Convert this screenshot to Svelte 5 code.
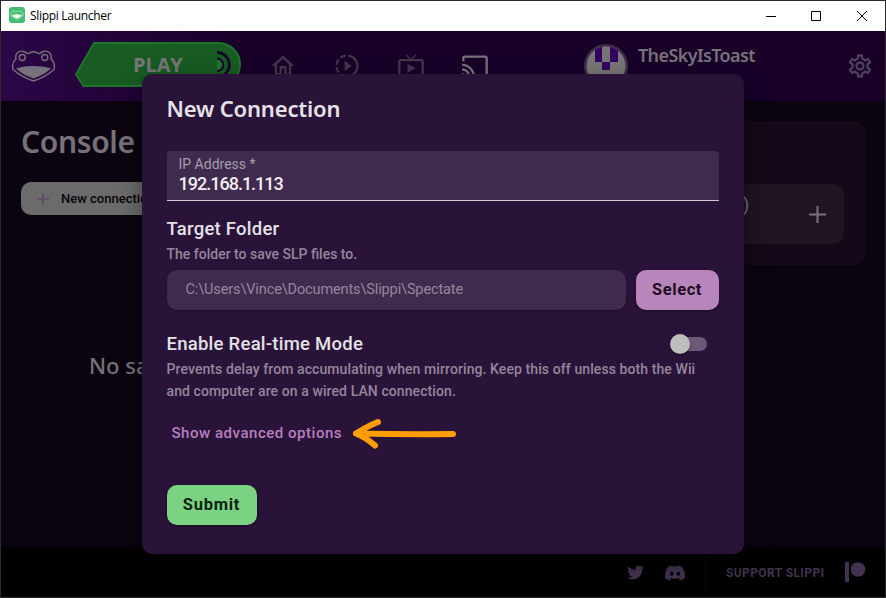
<script>
  const navIcons = [
    { name: 'home', path: 'M12 5.69l5 4.5V18h-2v-6H9v6H7v-7.81l5-4.5M12 3L2 12h3v8h6v-6h2v6h6v-8h3L12 3z' },
    { name: 'replays', path: 'M10 7.5v9L16 12zM11 4.07V2.05c-2.01.2-3.84 1-5.32 2.21L7.1 5.69c1.11-.86 2.44-1.44 3.9-1.62zM5.69 7.1L4.26 5.68C3.05 7.16 2.25 8.99 2.05 11h2.02c.18-1.46.76-2.79 1.62-3.9zM4.07 13H2.05c.2 2.01 1 3.84 2.21 5.32l1.43-1.43c-.86-1.1-1.44-2.43-1.62-3.89zm1.61 6.74C7.16 20.95 9 21.75 11 21.95v-2.02c-1.46-.18-2.79-.76-3.9-1.62l-1.42 1.43zM22 12c0 5.16-3.92 9.42-8.95 9.95v-2.02C16.97 19.41 20 16.05 20 12s-3.03-7.41-6.95-7.93V2.05C18.08 2.58 22 6.84 22 12z' },
    { name: 'spectate', path: 'M21 6h-7.59l3.29-3.29L16 2l-4 4-4-4-.71.71L10.59 6H3c-1.1 0-2 .89-2 2v12c0 1.1.9 2 2 2h18c1.1 0 2-.9 2-2V8c0-1.11-.9-2-2-2zm0 14H3V8h18v12zM9 10v8l7-4z' },
    { name: 'console', active: true, path: 'M21 3H3c-1.1 0-2 .9-2 2v3h2V5h18v14h-7v2h7c1.1 0 2-.9 2-2V5c0-1.1-.9-2-2-2zM1 18v3h3c0-1.66-1.34-3-3-3zm0-4v2c2.76 0 5 2.24 5 5h2c0-3.87-3.13-7-7-7zm0-4v2c4.97 0 9 4.03 9 9h2c0-6.08-4.93-11-11-11z' }
  ];
  let ip = $state('192.168.1.113');
</script>

<div class="window">
  <div class="titlebar">
    <svg class="appicon" viewBox="0 0 16 16"><rect width="16" height="16" rx="3" fill="#45bd70"/><path d="M2 8.5q-.5-2 1-3 .5-2 2.500-1.500l1 .7h3l1-.7q2-.5 2.500 1.500 1.500 1 1 3L8 12.500z" fill="none" stroke="#a9e2bb" stroke-width=".9"/><path d="M3 8q5-1.500 10 0-1.500 2.500-5 3.500-3.500-1-5-3.500z" fill="#effff4"/></svg>
    <span class="apptitle">Slippi Launcher</span>
    <div class="controls">
      <svg viewBox="0 0 12 12"><path d="M1 6.500h10" /></svg>
      <svg viewBox="0 0 12 12"><path d="M1.500 1.500h9v9h-9z" /></svg>
      <svg viewBox="0 0 12 12"><path d="M1 1l10 10M11 1L1 11" /></svg>
    </div>
  </div>

  <header>
    <svg class="frog" viewBox="0 0 44 32">
      <g fill="none" stroke="#77717c" stroke-width="1.400">
        <path d="M4 9C2.500 3 7 .9 10.500 1.200c2.500.2 4 1.600 4.800 2.500L21.500 1.500l6.200 2.200c.8-.9 2.300-2.300 4.800-2.500C36 .9 40.500 3 39 9c3 2.500 4 6 3 10.500C37 24 29 28.500 21.500 31 14 28.500 6 24 1 19.500 0 15 1 11.500 4 9z"/>
        <circle cx="10.200" cy="7.500" r="3"/><circle cx="32.800" cy="7.500" r="3"/>
      </g>
      <path d="M4 18.300q17.500-4.500 35 0-6 6.500-17.500 10.200Q10 24.800 4 18.300z" fill="#77717c"/>
    </svg>
    <div class="play">
      <svg viewBox="0 0 166 45">
        <path d="M19 1H143.500a21.500 21.500 0 0 1 0 43H8.500L1 32.500z" fill="#185b23" stroke="#1f742c" stroke-width="2"/>
        <path d="M142 10.500a12.300 12.300 0 0 1 0 24.600" fill="none" stroke="#16082a" stroke-width="2.800"/>
        <path d="M142 16.500a6.300 6.300 0 0 1 0 12.600z" fill="#1f742c" stroke="none"/>
        <path d="M142 16.500a6.300 6.300 0 0 1 0 12.600" fill="none" stroke="#16082a" stroke-width="2"/>
      </svg>
      <span>PLAY</span>
    </div>
    <nav>
      {#each navIcons as icon (icon.name)}
        <svg class:active={icon.active} viewBox="0 0 24 24"><path d={icon.path} /></svg>
      {/each}
    </nav>
    <svg class="avatar" viewBox="0 0 44 44">
      <defs><clipPath id="face"><circle cx="22" cy="22" r="19.500"/></clipPath></defs>
      <circle cx="22" cy="22" r="22" fill="#3d2c4b"/><circle cx="22" cy="22" r="19.500" fill="#777677"/>
      <path clip-path="url(#face)" d="M11 0h7v18h-7zM26 0h8v18h-8zM18 18h8v8h-8z" fill="#310461"/>
    </svg>
    <span class="user">TheSkyIsToast</span>
    <svg class="gear" viewBox="0 0 24 24"><path fill="#4e405c" d="M19.430 12.980c.04-.32.07-.64.07-.98 0-.34-.03-.66-.07-.98l2.110-1.650c.19-.15.24-.42.12-.64l-2-3.460c-.09-.16-.26-.25-.44-.25-.06 0-.12.010-.17.030l-2.490 1c-.52-.4-1.080-.73-1.690-.98l-.38-2.650C14.460 2.180 14.250 2 14 2h-4c-.25 0-.46.18-.49.42l-.38 2.650c-.61.25-1.170.59-1.690.98l-2.490-1c-.06-.02-.12-.03-.18-.03-.17 0-.34.09-.43.25l-2 3.460c-.13.22-.07.49.12.64l2.110 1.650c-.04.32-.07.65-.07.98 0 .33.03.66.07.98l-2.110 1.650c-.19.15-.24.42-.12.64l2 3.460c.09.16.26.25.44.25.06 0 .12-.01.17-.03l2.490-1c.52.4 1.080.73 1.690.98l.38 2.650c.03.24.24.42.49.42h4c.25 0 .46-.18.49-.42l.38-2.650c.61-.25 1.170-.59 1.690-.98l2.490 1c.06.02.12.03.18.03.17 0 .34-.09.43-.25l2-3.460c.12-.22.07-.49-.12-.64l-2.110-1.650zm-1.980-1.710c.04.31.05.52.05.73 0 .21-.02.43-.05.73l-.14 1.130.89.7 1.080.84-.7 1.210-1.270-.51-1.040-.42-.9.68c-.43.32-.84.56-1.250.73l-1.060.43-.16 1.130-.2 1.350h-1.400l-.19-1.350-.16-1.130-1.060-.43c-.43-.18-.83-.41-1.230-.71l-.91-.7-1.060.43-1.270.51-.7-1.210 1.080-.84.89-.7-.14-1.130c-.03-.31-.05-.54-.05-.74s.02-.43.05-.73l.14-1.130-.89-.7-1.080-.84.7-1.210 1.270.51 1.040.42.9-.68c.43-.32.84-.56 1.250-.73l1.060-.43.16-1.130.2-1.350h1.390l.19 1.350.16 1.130 1.060.43c.43.18.83.41 1.230.71l.91.7 1.060-.43 1.270-.51.7 1.210-1.070.85-.89.7.14 1.130zM12 8c-2.210 0-4 1.790-4 4s1.790 4 4 4 4-1.790 4-4-1.790-4-4-4zm0 6c-1.100 0-2-.9-2-2s.9-2 2-2 2 .9 2 2-.9 2-2 2z"/></svg>
  </header>

  <main>
    <section class="left">
      <h1>Console</h1>
      <div class="newconn"><svg viewBox="0 0 12 12"><path d="M6 0v12M0 6h12" stroke="#5f4a68" stroke-width="1.700"/></svg><span>New connection</span></div>
      <p>No sa</p>
    </section>
    <section class="right">
      <div class="entry"><span>)</span><svg viewBox="0 0 16 16"><path d="M8 0v16M0 8h16" stroke="#777078" stroke-width="2"/></svg></div>
    </section>
  </main>

  <footer>
    <svg class="twitter" viewBox="0 2 24 20"><path d="M23.953 4.570a10 10 0 01-2.825.775 4.958 4.958 0 002.163-2.723c-.951.555-2.005.959-3.127 1.184a4.920 4.920 0 00-8.384 4.482C7.690 8.095 4.067 6.130 1.640 3.162a4.822 4.822 0 00-.666 2.475c0 1.710.87 3.213 2.188 4.096a4.904 4.904 0 01-2.228-.616v.06a4.923 4.923 0 003.946 4.827 4.996 4.996 0 01-2.212.085 4.936 4.936 0 004.604 3.417 9.867 9.867 0 01-6.102 2.105c-.39 0-.779-.023-1.170-.067a13.995 13.995 0 007.557 2.209c9.053 0 13.998-7.496 13.998-13.985 0-.21 0-.42-.015-.63A9.935 9.935 0 0024 4.590z"/></svg>
    <svg class="discord" viewBox="0 2.500 24 19"><path fill-rule="evenodd" d="M20.317 4.370a19.800 19.800 0 00-4.885-1.515c-.03 0-.06.01-.08.04-.21.375-.445.865-.61 1.250a18.300 18.300 0 00-5.485 0c-.164-.394-.406-.875-.618-1.250-.02-.03-.05-.04-.08-.037a19.740 19.740 0 00-4.885 1.515C.533 9.046-.319 13.580.1 18.058c2.053 1.508 4.041 2.423 6.100 3.085.462-.63.873-1.295 1.250-2.022-.653-.248-1.274-.55-1.960-1.050l.45-.37c3.928 1.793 8.180 1.793 12.140 0l.45.34c-.6.43-1.240.79-1.960 1.080.36.698.772 1.363 1.310 2.022 1.961-.607 3.950-1.522 6.030-3.085.5-5.177-.838-9.674-3.593-13.688zM8.020 15.331c-1.183 0-2.157-1.086-2.157-2.419s.956-2.419 2.157-2.419c1.211 0 2.176 1.095 2.157 2.419 0 1.333-.956 2.419-2.157 2.419zm7.975 0c-1.183 0-2.157-1.086-2.157-2.419s.955-2.419 2.157-2.419c1.211 0 2.176 1.095 2.157 2.419 0 1.333-.946 2.419-2.157 2.419z"/></svg>
    <i class="divider"></i>
    <span class="support">SUPPORT SLIPPI</span>
    <svg class="patreon" viewBox="0 0 21 20"><path d="M0 0h4v20H0z"/><circle cx="13" cy="7.500" r="7.300"/></svg>
  </footer>

  <div class="backdrop">
    <div class="modal">
      <h2>New Connection</h2>
      <label class="field"><span>IP Address *</span><input bind:value={ip} /></label>
      <h3 class="target">Target Folder</h3>
      <p class="desc one">The folder to save SLP files to.</p>
      <div class="folder"><div class="path">C:\Users\Vince\Documents\Slippi\Spectate</div><button class="select">Select</button></div>
      <div class="mode"><h3>Enable Real-time Mode</h3><i class="switch"></i></div>
      <p class="desc two">Prevents delay from accumulating when mirroring. Keep this off unless both the Wii and computer are on a wired LAN connection.</p>
      <div class="advanced"><span>Show advanced options</span>
        <svg viewBox="0 0 106 34"><path d="M5 17.500q50 1 97 .5M27 6Q17 10 5 17.500q10 4 19 12" fill="none" stroke="#ff9d02" stroke-width="6" stroke-linecap="round" stroke-linejoin="round"/></svg>
      </div>
      <button class="submit">Submit</button>
    </div>
  </div>
</div>

<style>
  :global(body) { margin: 0; background: #000; }
  * { box-sizing: border-box; }
  .window { position: relative; width: 886px; height: 598px; border: 1px solid #2c2a2d; display: flex; flex-direction: column; overflow: hidden; font-family: Roboto, "Open Sans", sans-serif; background: #0b0410; }
  svg { display: block; flex: none; }
  span { white-space: nowrap; }
  h1, h2, h3, p { margin: 0; }
  button { border: 0; padding: 0; font: inherit; }
  .titlebar { height: 30px; background: #fff; display: flex; align-items: center; padding-left: 8px; flex: none; }
  .appicon { width: 16px; height: 16px; margin-top: -2px; }
  .apptitle { font: 12px/16px "Open Sans", "Noto Sans", sans-serif; letter-spacing: -0.3px; margin-left: 5px; color: #000; }
  .controls { margin-left: auto; display: flex; gap: 33px; padding-right: 17px; margin-top: -1px; }
  .controls svg { width: 12px; height: 12px; fill: none; stroke: #000; stroke-width: 1; }
  .controls svg:not(:last-child) { margin-left: -1px; margin-right: 1px; }
  header { height: 70px; flex: none; display: flex; align-items: center; background: linear-gradient(90deg, #2b0647, #180029 28%, #180029); }
  .frog { width: 44px; height: 32px; margin-left: 11px; }
  .play { width: 166px; height: 45px; margin-left: 19px; position: relative; margin-top: -3px; }
  .play svg { width: 166px; height: 45px; }
  .play span { position: absolute; left: 58px; top: 10px; font: 700 20px/26px "Open Sans", sans-serif; letter-spacing: -.1px; color: #777; }
  nav { display: flex; gap: 36px; margin-left: 28px; }
  nav svg { width: 28px; height: 28px; fill: #43364d; }
  nav svg.active { fill: #77717a; }
  .avatar { width: 44px; height: 44px; margin-left: 95px; }
  .user { font: 600 18px/22px "Noto Sans", sans-serif; letter-spacing: -.62px; color: #777279; margin: -23px 0 0 10px; width: 119px; }
  .gear { width: 28px; height: 28px; margin-left: auto; margin-right: 11.5px; }
  main { height: 446px; flex: none; display: flex; justify-content: space-between; padding: 20px 20px 0; }
  .left h1 { font: 600 30px/42px "Noto Sans", sans-serif; letter-spacing: -.35px; color: #777279; }
  .newconn { margin-top: 19px; height: 33px; width: 160px; border-radius: 10px; background: #6c6b6c; display: flex; align-items: center; padding-left: 16px; gap: 12px; font: 500 13px Roboto, sans-serif; color: #08030c; }
  .newconn svg { width: 12px; height: 12px; }
  .newconn span { margin-top: -1px; }
  .left p { margin: 134px 0 0 68px; font: 500 22px/32px "Noto Sans", sans-serif; color: #777279; }
  .right { width: 160px; height: 144px; border-radius: 10px; background: #140918; padding: 63px 21px 0 0; }
  .entry { height: 60px; background: #201421; border-radius: 10px; display: flex; align-items: center; justify-content: space-between; padding: 0 18px 0 38px; }
  .entry span { font-size: 18px; color: #777279; margin-top: -20px; }
  .entry svg { width: 17px; height: 17px; }
  footer { flex: 1; background: #000; display: flex; align-items: center; justify-content: flex-end; padding: 1px 19px 0 0; fill: #43324f; }
  .twitter { width: 17px; height: 15px; }
  .discord { width: 20px; height: 16px; margin-left: 21px; }
  .divider { width: 1px; height: 30px; background: #110719; margin: 0 20px 0 20px; }
  .support { font-weight: 700; font-size: 12px; letter-spacing: .4px; color: #43324f; width: 99px; }
  .patreon { width: 21px; height: 20px; margin-left: 20px; margin-top: -2px; }
  .backdrop { position: absolute; inset: 0; display: flex; justify-content: center; align-items: flex-start; padding: 73px 1px 0 0; }
  .modal { width: 602px; height: 480px; border-radius: 10px; background: #2a1339; padding: 18px 25px; box-shadow: 0 8px 24px #0006; display: flex; flex-direction: column; align-items: stretch; color: #e4e1e7; }
  h2 { font: 600 22px/32px "Noto Sans", sans-serif; letter-spacing: -.17px; }
  .field { margin-top: 27px; height: 50px; border-radius: 4px 4px 0 0; background: #402b4f; border-bottom: 1px solid #d0cad4; padding: 5px 12px 0; display: flex; flex-direction: column; }
  .field span { font-size: 14px; line-height: 17px; color: #a59dac; }
  .field input { border: 0; outline: 0; padding: 0; background: transparent; color: #f0eef1; font: 500 18px/24px Roboto, sans-serif; letter-spacing: -1px; height: 24px; margin-top: -1px; }
  h3 { font: 500 18.500px/24px Roboto, sans-serif; letter-spacing: .25px; }
  .target { margin-top: 16px; }
  .desc { font: 500 14px/22px Roboto, sans-serif; color: #93869c; }
  .one { margin-top: 2px; }
  .folder { display: flex; gap: 10px; margin-top: 5px; }
  .path { width: 459px; height: 40px; border-radius: 10px; background: #402b4f; padding-left: 19px; font-size: 14.500px; letter-spacing: -.12px; line-height: 39px; color: #93869c; box-shadow: 0 1px 2px #0005; }
  .select { width: 83px; height: 40px; border-radius: 10px; background: #b985bd; color: #1c0d20; font: 700 16.500px/39px Roboto, sans-serif; box-shadow: 0 1px 3px #0007; letter-spacing: .6px; padding-bottom: 1px; }
  .mode { display: flex; justify-content: space-between; align-items: center; margin-top: 22px; padding-right: 12px; }
  .switch { position: relative; width: 34px; height: 14px; border-radius: 7px; background: #6a5876; }
  .switch::before { content: ""; position: absolute; left: -3px; top: -3px; width: 20px; height: 20px; border-radius: 50%; background: #bdbdbd; box-shadow: 0 1px 2px #0006; }
  .two { margin-top: 2px; letter-spacing: .09px; }
  .advanced { display: flex; align-items: center; height: 34px; margin-top: 14px; padding-left: 5px; color: #b77fbd; font: 500 15px Roboto, sans-serif; letter-spacing: .53px; }
  .advanced span { width: 179px; margin-top: -1px; }
  .advanced svg { width: 106px; height: 34px; }
  .submit { width: 90px; height: 40px; margin-top: 35px; border-radius: 10px; background: #7ad282; color: #0d2412; font: 700 16.500px/39px Roboto, sans-serif; box-shadow: 0 1px 3px #0007; letter-spacing: .75px; padding-bottom: 1px; }
</style>
